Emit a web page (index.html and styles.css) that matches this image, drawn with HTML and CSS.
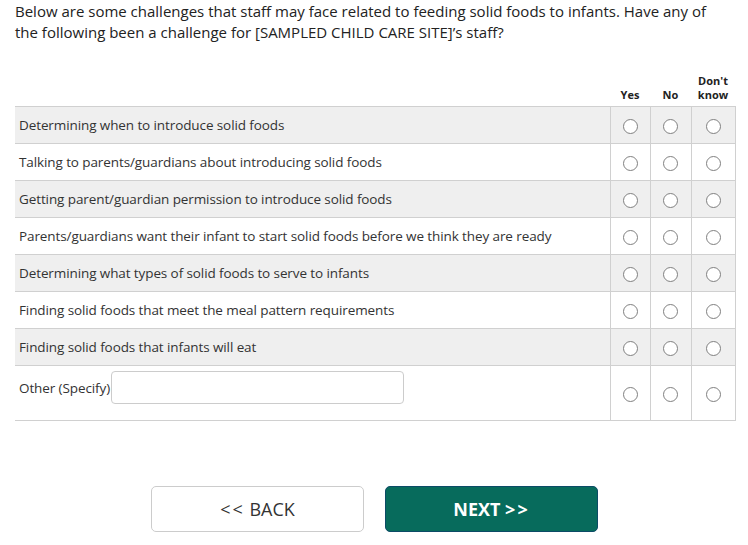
FILE: index.html
```html
<!DOCTYPE html>
<html>
<head>
<meta charset="utf-8">
<link rel="stylesheet" href="styles.css">
</head>
<body>
<div class="page">
  <p class="question">Below are some challenges that staff may face related to feeding solid foods to infants. Have any of the following been a challenge for [SAMPLED CHILD CARE SITE]’s staff?</p>
  <table class="grid">
    <thead>
      <tr>
        <th class="label-col"></th>
        <th class="opt yes">Yes</th>
        <th class="opt no">No</th>
        <th class="opt dk"><span class="dk-line">Don't</span><span class="dk-line">know</span></th>
      </tr>
    </thead>
    <tbody>
      <tr class="shade"><td class="label">Determining when to introduce solid foods</td><td class="cell"><span class="radio"></span></td><td class="cell"><span class="radio"></span></td><td class="cell"><span class="radio"></span></td></tr>
      <tr><td class="label">Talking to parents/guardians about introducing solid foods</td><td class="cell"><span class="radio"></span></td><td class="cell"><span class="radio"></span></td><td class="cell"><span class="radio"></span></td></tr>
      <tr class="shade"><td class="label">Getting parent/guardian permission to introduce solid foods</td><td class="cell"><span class="radio"></span></td><td class="cell"><span class="radio"></span></td><td class="cell"><span class="radio"></span></td></tr>
      <tr><td class="label">Parents/guardians want their infant to start solid foods before we think they are ready</td><td class="cell"><span class="radio"></span></td><td class="cell"><span class="radio"></span></td><td class="cell"><span class="radio"></span></td></tr>
      <tr class="shade"><td class="label">Determining what types of solid foods to serve to infants</td><td class="cell"><span class="radio"></span></td><td class="cell"><span class="radio"></span></td><td class="cell"><span class="radio"></span></td></tr>
      <tr><td class="label">Finding solid foods that meet the meal pattern requirements</td><td class="cell"><span class="radio"></span></td><td class="cell"><span class="radio"></span></td><td class="cell"><span class="radio"></span></td></tr>
      <tr class="shade"><td class="label">Finding solid foods that infants will eat</td><td class="cell"><span class="radio"></span></td><td class="cell"><span class="radio"></span></td><td class="cell"><span class="radio"></span></td></tr>
      <tr class="other"><td class="label other-label"><div class="other-wrap"><span>Other (Specify)</span><input class="specify" type="text"></div></td><td class="cell"><span class="radio"></span></td><td class="cell"><span class="radio"></span></td><td class="cell"><span class="radio"></span></td></tr>
    </tbody>
  </table>
  <div class="nav">
    <button class="btn back"><span class="arrows">&lt;&lt;</span> BACK</button>
    <button class="btn next">NEXT <span class="arrows">&gt;&gt;</span></button>
  </div>
</div>
</body>
</html>
```
FILE: styles.css
```css
* { box-sizing: border-box; }
html, body { margin: 0; padding: 0; background: #fff; }
body {
  font-family: "Open Sans", "Noto Sans", "Liberation Sans", sans-serif;
  color: #222;
}
.page {
  width: 748px;
  padding: 1px 13px 0 15px;
}
.question {
  margin: 0;
  width: 712px;
  font-size: 15px;
  line-height: 21px;
  letter-spacing: 0;
  color: #222;
}
.grid {
  margin-top: 31px;
  width: 720px;
  border-collapse: collapse;
  table-layout: fixed;
}
.grid th {
  font-size: 11px;
  font-weight: 700;
  line-height: 14px;
  color: #222;
  vertical-align: bottom;
  padding: 0 0 4px;
  text-align: center;
}
.dk-line { display: block; line-height: 14px; }
.label-col { width: 595px; }
.opt.yes { width: 40px; }
.opt.no { width: 41px; }
.opt.dk { width: 44px; }
.grid tbody tr { height: 37px; border-top: 1px solid #d0d0d0; }
.grid tbody tr.other { height: 55px; border-bottom: 1px solid #d0d0d0; }
.grid tbody tr.shade { background: #efefef; }
.label {
  font-size: 13.5px;
  letter-spacing: -0.1px;
  color: #333;
  padding: 0 4px;
  vertical-align: middle;
}
.label.other-label {
  vertical-align: top;
  padding-top: 5px;
}
.cell {
  border-left: 1px solid #d0d0d0;
  text-align: center;
  vertical-align: middle;
  padding: 0;
}
.cell:last-child { border-right: 1px solid #d0d0d0; }
.radio {
  display: inline-block;
  width: 15px;
  height: 15px;
  border: 1px solid #808080;
  border-radius: 50%;
  background: #fff;
  vertical-align: middle;
  margin-top: -1px;
}
.other-wrap {
  display: flex;
  align-items: center;
}
.specify {
  width: 293px;
  height: 33px;
  border: 1px solid #ccc;
  border-radius: 4px;
  margin: 0 0 0 1px;
  background: #fff;
}
.nav {
  display: flex;
  gap: 21px;
  padding: 65px 0 0 136px;
}
.btn {
  width: 213px;
  height: 46px;
  border-radius: 5px;
  font-family: "Open Sans", "Noto Sans", sans-serif;
  font-size: 18px;
  letter-spacing: 0;
  cursor: pointer;
}
.arrows { letter-spacing: 2px; }
.back {
  background: #fff;
  border: 1px solid #ccc;
  color: #333;
}
.next {
  background: #076b5c;
  border: 1px solid #0c4b66;
  color: #fff;
  font-weight: 700;
}
```
